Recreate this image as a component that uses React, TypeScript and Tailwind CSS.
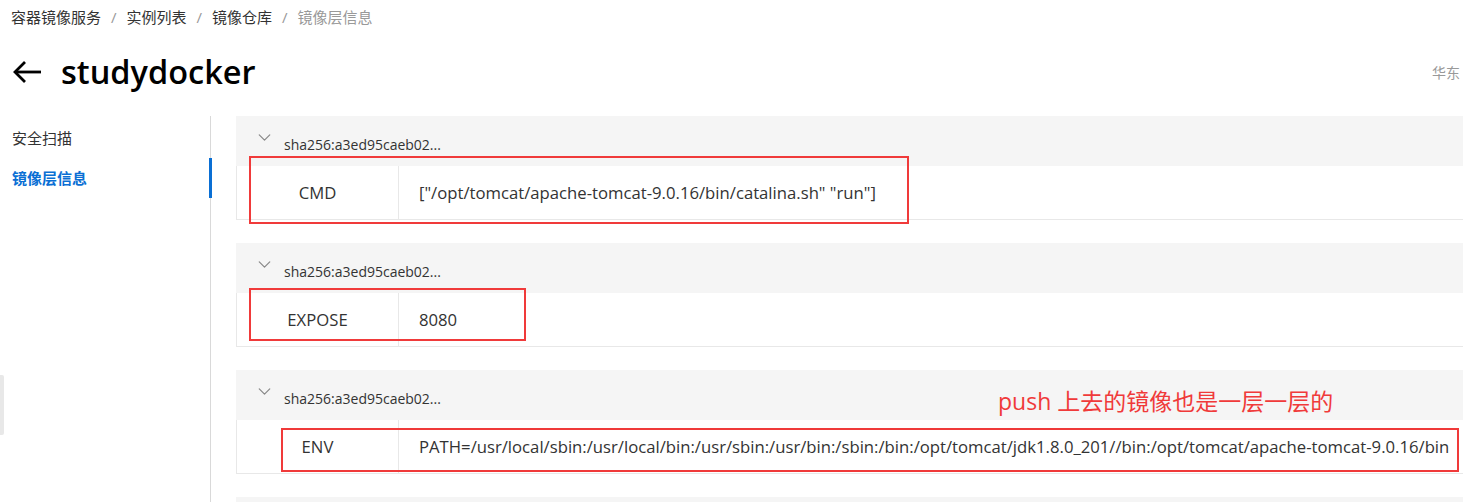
import { ChevronDown } from "lucide-react";

type Layer = {
  hash: string;
  key: string;
  value: string;
};

const layers: Layer[] = [
  {
    hash: "sha256:a3ed95caeb02...",
    key: "CMD",
    value: '["/opt/tomcat/apache-tomcat-9.0.16/bin/catalina.sh" "run"]',
  },
  { hash: "sha256:a3ed95caeb02...", key: "EXPOSE", value: "8080" },
  {
    hash: "sha256:a3ed95caeb02...",
    key: "ENV",
    value:
      "PATH=/usr/local/sbin:/usr/local/bin:/usr/sbin:/usr/bin:/sbin:/bin:/opt/tomcat/jdk1.8.0_201//bin:/opt/tomcat/apache-tomcat-9.0.16/bin",
  },
];

// red annotation boxes drawn over each row
const marks = [
  "left-[12px] -top-[10px] w-[660px] h-[68px]",
  "left-[12px] -top-[5px] w-[277px] h-[53px]",
  "left-[44px] top-[8px] w-[1178px] h-[44px]",
];

const font = "font-['Open_Sans','Noto_Sans_CJK_SC',sans-serif]";

export default function App() {
  return (
    <div className={`w-[1463px] h-[502px] overflow-hidden bg-white relative ${font}`}>
      {/* breadcrumb */}
      <div className="h-[34px] pl-[11px] flex items-center text-[15px] text-[#333]">
        <span>容器镜像服务</span>
        <span className="mx-[10px] text-[#999]">/</span>
        <span>实例列表</span>
        <span className="mx-[10px] text-[#999]">/</span>
        <span>镜像仓库</span>
        <span className="mx-[10px] text-[#999]">/</span>
        <span className="text-[#999]">镜像层信息</span>
      </div>

      {/* title */}
      <div className="h-[82px] flex items-center pl-[12px] pr-[3px] pb-[6px]">
        <svg width="30" height="24" viewBox="0 0 30 24" fill="none" stroke="#000" strokeWidth="2.8">
          <path d="M29 12H3" />
          <path d="M13 2L3 12l10 10" />
        </svg>
        <h1 className="ml-[19px] text-[32.5px] font-semibold text-black leading-none">studydocker</h1>
        <span className="ml-auto text-[14px] text-[#999]">华东</span>
      </div>

      <div className="flex h-[386px]">
        {/* sidebar */}
        <div className="w-[211px] shrink-0 border-r border-[#d9d9d9] pt-[2px]">
          <div className="h-10 flex items-center pl-[12px] text-[15px] text-[#333]">安全扫描</div>
          <div className="h-10 flex items-center pl-[12px] text-[15px] font-semibold text-[#0a6fd4] border-r-[3px] border-[#0a6fd4] -mr-[2px]">
            镜像层信息
          </div>
        </div>

        {/* layers */}
        <div className="flex-1 pl-[25px] flex flex-col gap-[23px]">
          {layers.map((layer, index) => (
            <div key={index} className="relative">
              <div className="h-[50px] bg-[#f5f5f5] flex items-center pl-[18px] pt-[2px]">
                <ChevronDown size={21} strokeWidth={1.4} className="text-[#888] -mt-[10px]" />
                <span className="ml-[9px] mt-[4px] text-[14px] text-[#333]">{layer.hash}</span>
              </div>
              <div className="relative h-[54px] flex border border-t-0 border-[#e8e8e8] border-r-0 text-[16.7px] text-[#333]">
                <div className="w-[162px] shrink-0 border-r border-[#e8e8e8] flex items-center justify-center">
                  {layer.key}
                </div>
                <div className="pl-[20px] flex items-center whitespace-nowrap">{layer.value}</div>
                <div className={`absolute border-2 border-[#f03a3a] ${marks[index]}`} />
              </div>
              {index === 2 && (
                <span className="absolute left-[762px] top-[20px] text-[23px] text-[#f03a3a] leading-none">
                  push 上去的镜像也是一层一层的
                </span>
              )}
            </div>
          ))}
          <div className="h-[50px] bg-[#f5f5f5]" />
        </div>
      </div>

      {/* collapsed side handle */}
      <div className="absolute left-0 top-[375px] w-[4px] h-[60px] bg-[#e8e8e8] rounded-r-[2px]" />
    </div>
  );
}
